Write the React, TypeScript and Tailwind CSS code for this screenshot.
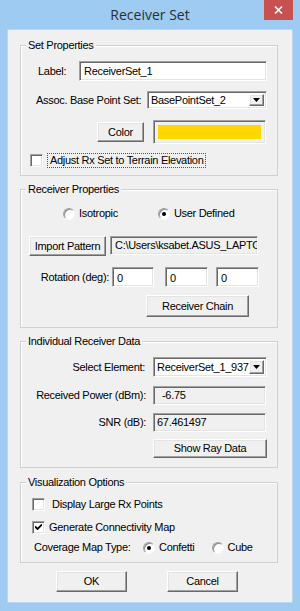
import React from "react";

const sunken =
  "border border-t-[#a0a0a0] border-l-[#a0a0a0] border-b-white border-r-white shadow-[inset_1px_1px_0_#696969,inset_-1px_-1px_0_#e3e3e3]";
const raised =
  "border border-t-white border-l-white border-b-[#696969] border-r-[#696969] shadow-[inset_-1px_-1px_0_#a0a0a0,inset_1px_1px_0_#e3e3e3] bg-[#f0f0f0]";

function Btn({ label, className }: { label: string; className: string }) {
  return (
    <div className={`${raised} flex items-center justify-center leading-none ${className}`}>
      <span>{label}</span>
    </div>
  );
}

function Field({ value, className, ro }: { value: string; className: string; ro?: boolean }) {
  return (
    <div
      className={`${sunken} ${ro ? "bg-[#f0f0f0]" : "bg-white"} flex items-center overflow-hidden whitespace-nowrap ${className}`}
    >
      {value}
    </div>
  );
}

function Combo({ value, className }: { value: string; className: string }) {
  return (
    <div className={`${sunken} bg-white flex items-stretch p-[2px] ${className}`}>
      <div className="flex-1 flex items-center pl-[1px] overflow-hidden whitespace-nowrap">{value}</div>
      <div className={`${raised} w-[15px] flex items-center justify-center`}>
        <svg width="7" height="4" viewBox="0 0 7 4">
          <path d="M0 0h7L3.5 4z" fill="#000" />
        </svg>
      </div>
    </div>
  );
}

function Check({ checked }: { checked?: boolean }) {
  return (
    <div className={`${sunken} bg-white w-[13px] h-[13px] flex items-center justify-center shrink-0`}>
      {checked && (
        <svg width="7" height="7" viewBox="0 0 7 7">
          <path d="M0 2.5l2.5 2.5L7 0.5" stroke="#000" strokeWidth="1.8" fill="none" />
        </svg>
      )}
    </div>
  );
}

function Radio({ on }: { on?: boolean }) {
  return (
    <div className="w-[12px] h-[12px] rounded-full border border-t-[#a0a0a0] border-l-[#a0a0a0] border-b-[#f8f8f8] border-r-[#f8f8f8] bg-white shadow-[inset_1px_1px_0_#8a8a8a] flex items-center justify-center shrink-0">
      {on && <div className="w-[4px] h-[4px] rounded-full bg-black" />}
    </div>
  );
}

function Group({ title, h, children }: { title: string; h: string; children: React.ReactNode }) {
  return (
    <div className={`ml-[12px] w-[258px] border border-[#d0d0d0] shadow-[inset_1px_1px_0_#fff] flex flex-col ${h}`}>
      <div className="-mt-[7px] ml-[5px] h-[13px] leading-[13px] px-[2px] w-fit bg-[#f0f0f0]">{title}</div>
      {children}
    </div>
  );
}

export default function App() {
  return (
    <div className="w-[300px] h-[611px] bg-[#9ecbf2] flex flex-col text-[11px] text-black font-['Liberation_Sans',Arial,sans-serif] tracking-[-0.3px]">
      {/* title bar */}
      <div className="h-[29px] grid grid-cols-[1fr_auto_1fr] shrink-0">
        <div />
        <div className="self-center pb-[1px] text-[14px] tracking-normal text-[#2e2e2e] font-['Open_Sans',sans-serif]">
          Receiver Set
        </div>
        <div className="flex justify-end items-start pr-[7px]">
          <div className="w-[29px] h-[20px] bg-[#c75050] flex items-center justify-center">
            <svg width="9" height="8" viewBox="0 0 9 8">
              <path d="M1 0.5l7 7M8 0.5l-7 7" stroke="#fff" strokeWidth="1.6" />
            </svg>
          </div>
        </div>
      </div>

      {/* client area */}
      <div className="ml-[7px] w-[286px] h-[574px] border border-[#bcd6ec] bg-[#f0f0f0] flex flex-col">
        <div className="h-[15px] shrink-0" />

        <Group title="Set Properties" h="h-[131px]">
          <div className="mt-[9px] flex items-center">
            <div className="w-[58px] pl-[17px]">Label:</div>
            <Field value="ReceiverSet_1" className="w-[188px] h-[20px] pl-[4px]" />
          </div>
          <div className="mt-[10px] flex items-center">
            <div className="w-[126px] pl-[15px]">Assoc. Base Point Set:</div>
            <Combo value="BasePointSet_2" className="w-[120px] h-[18px]" />
          </div>
          <div className="mt-[11px] flex items-center">
            <Btn label="Color" className="ml-[76px] w-[47px] h-[20px]" />
            <div className={`${sunken} ml-[9px] w-[113px] h-[24px] bg-[#f0f0f0] p-[4px]`}>
              <div className="w-full h-full bg-[#ffd700]" />
            </div>
          </div>
          <div className="mt-[9px] flex items-center h-[15px]">
            <div className="ml-[9px]">
              <Check />
            </div>
            <div className="ml-[4px] px-[2px] border border-dotted border-[#555] h-[15px] leading-[13px]">
              Adjust Rx Set to Terrain Elevation
            </div>
          </div>
        </Group>

        <div className="h-[13px] shrink-0" />

        <Group title="Receiver Properties" h="h-[139px]">
          <div className="mt-[11px] flex items-center h-[13px]">
            <div className="ml-[42px]">
              <Radio />
            </div>
            <span className="ml-[4px]">Isotropic</span>
            <div className="ml-[40px]">
              <Radio on />
            </div>
            <span className="ml-[4px]">User Defined</span>
          </div>
          <div className="mt-[16px] flex items-start">
            <Btn label="Import Pattern" className="ml-[8px] w-[77px] h-[20px]" />
            <Field ro value="C:\Users\ksabet.ASUS_LAPTOP" className="ml-[4px] w-[148px] h-[19px] pl-[4px]" />
          </div>
          <div className="mt-[11px] flex items-center">
            <div className="w-[91px] pr-[3px] text-right">Rotation (deg):</div>
            <Field value="0" className="w-[42px] h-[20px] pl-[4px] items-start pt-[2px]" />
            <Field value="0" className="ml-[11px] w-[43px] h-[20px] pl-[4px] items-start pt-[2px]" />
            <Field value="0" className="ml-[8px] w-[43px] h-[20px] pl-[4px] items-start pt-[2px]" />
          </div>
          <div className="mt-[8px] flex">
            <Btn label="Receiver Chain" className="ml-[125px] w-[103px] h-[22px]" />
          </div>
        </Group>

        <div className="h-[13px] shrink-0" />

        <Group title="Individual Receiver Data" h="h-[127px]">
          <div className="mt-[9px] flex items-center">
            <div className="w-[132px] pr-[8px] text-right">Select Element:</div>
            <Combo value="ReceiverSet_1_937" className="w-[114px] h-[20px]" />
          </div>
          <div className="mt-[9px] flex items-center">
            <div className="w-[132px] pr-[7px] text-right">Received Power (dBm):</div>
            <Field ro value="-6.75" className="w-[113px] h-[19px] pl-[8px]" />
          </div>
          <div className="mt-[8px] flex items-center">
            <div className="w-[132px] pr-[7px] text-right">SNR (dB):</div>
            <Field ro value="67.461497" className="w-[113px] h-[19px] pl-[3px]" />
          </div>
          <div className="mt-[7px] flex">
            <Btn label="Show Ray Data" className="ml-[132px] w-[114px] h-[19px]" />
          </div>
        </Group>

        <div className="h-[14px] shrink-0" />

        <Group title="Visualization Options" h="h-[81px]">
          <div className="mt-[9px] flex items-center h-[13px]">
            <div className="ml-[11px]">
              <Check />
            </div>
            <span className="ml-[7px]">Display Large Rx Points</span>
          </div>
          <div className="mt-[10px] flex items-center h-[13px]">
            <div className="ml-[11px]">
              <Check checked />
            </div>
            <span className="ml-[4px]">Generate Connectivity Map</span>
          </div>
          <div className="mt-[7px] flex items-center h-[13px]">
            <span className="ml-[13px] w-[109px]">Coverage Map Type:</span>
            <Radio on />
            <span className="ml-[4px]">Confetti</span>
            <div className="ml-[17px]">
              <Radio />
            </div>
            <span className="ml-[4px]">Cube</span>
          </div>
        </Group>

        <div className="mt-[8px] flex">
          <Btn label="OK" className="ml-[48px] w-[71px] h-[21px]" />
          <Btn label="Cancel" className="ml-[40px] w-[71px] h-[21px]" />
        </div>
      </div>
    </div>
  );
}
